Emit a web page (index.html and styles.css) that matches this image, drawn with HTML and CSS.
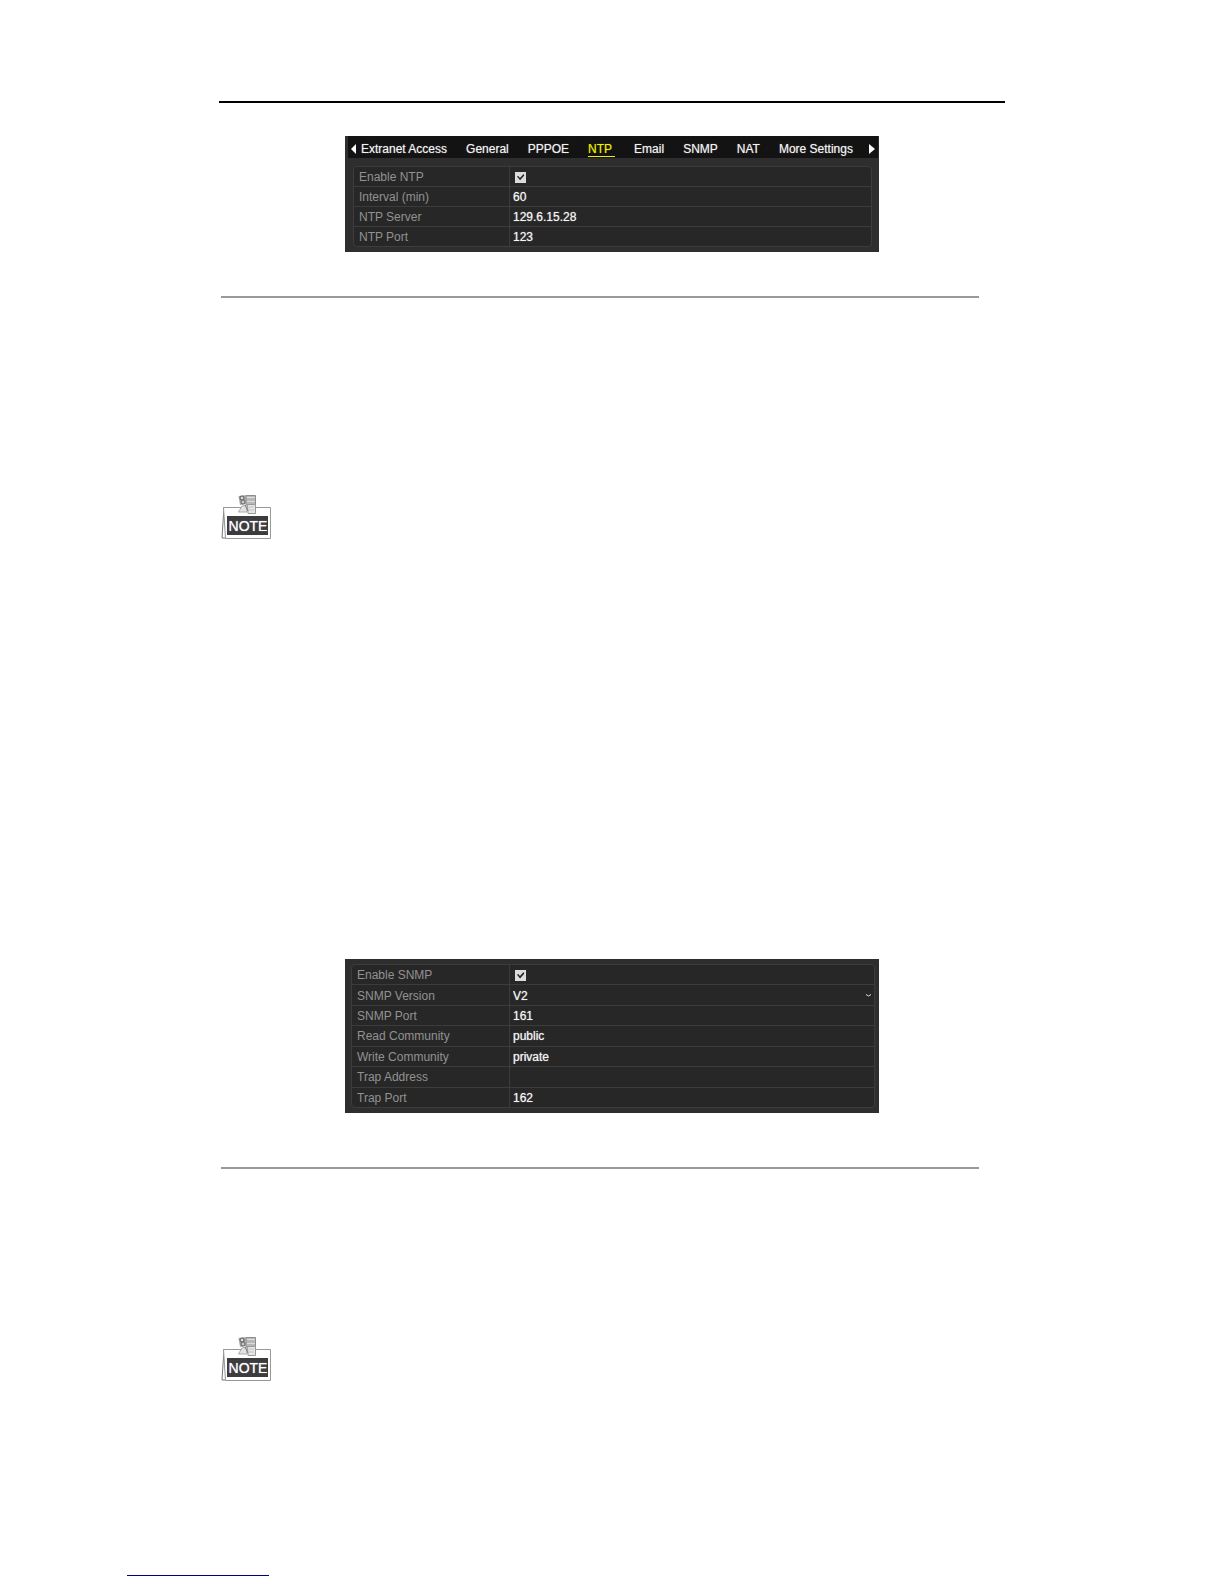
FILE: index.html
```html
<!DOCTYPE html>
<html lang="en">
<head>
<meta charset="utf-8">
<meta name="viewport" content="width=device-width, initial-scale=1">
<title>NTP and SNMP Settings</title>
<link rel="stylesheet" href="styles.css">
</head>
<body>
<svg class="defs" aria-hidden="true">
  <symbol id="note-sign" viewBox="0 0 52 48">
    <path d="M3 14 L1 45 H5 Z" fill="#fff" stroke="#777"/>
    <path d="M2.500 14.500 H49.500 V45.500 H4.500 Z" fill="#fff" stroke="#999"/>
    <rect x="6" y="23" width="41" height="19" fill="#3c3c3e"/>
    <path d="M25 2.500 H34.500 V11.500 H25 Z" fill="#b8b8b8" stroke="#8c8c8c"/>
    <path d="M26 4.500 H34 M26 8.500 H34" stroke="#dedede"/>
    <path d="M17.500 3 L25.500 2 V11 L19 12 Z" fill="#a5a5a5"/>
    <circle cx="21" cy="5" r="2" fill="#ddd" stroke="#555"/>
    <circle cx="22" cy="9" r="2" fill="#ccc" stroke="#666"/>
    <path d="M26.500 11.500 H34.500 V20.500 H27 Z" fill="#e6e6e6" stroke="#999"/>
    <path d="M28 14 H33 M28 17 H33" stroke="#c4c4c4"/>
    <path d="M17.500 19 L21 13 L26 12 V19 Z" fill="#e2e2e2" stroke="#aaa"/>
    <path d="M24 12 L27 18" stroke="#777"/>
  </symbol>
</svg>
<main class="page">
  <hr class="rule-top">

  <section class="panel panel-ntp" aria-label="NTP settings">
    <nav class="tabs" aria-label="Network settings">
      <button class="arrow" type="button" aria-label="Previous"><svg width="5" height="10" viewBox="0 0 5 10"><path d="M5 0 V10 L0 5 Z" fill="#fff"/></svg></button>
      <div class="tab-list">
        <a class="tab" href="#extranet">Extranet Access</a>
        <a class="tab" href="#general">General</a>
        <a class="tab" href="#pppoe">PPPOE</a>
        <a class="tab active" href="#ntp" aria-current="page">NTP</a>
        <a class="tab" href="#email">Email</a>
        <a class="tab" href="#snmp">SNMP</a>
        <a class="tab" href="#nat">NAT</a>
        <a class="tab" href="#more">More Settings</a>
      </div>
      <button class="arrow" type="button" aria-label="Next"><svg width="6" height="10" viewBox="0 0 6 10"><path d="M0 0 V10 L6 5 Z" fill="#fff"/></svg></button>
    </nav>
    <table class="settings settings-ntp">
      <tr><th scope="row"><label for="ntp-on">Enable NTP</label></th><td><input class="check" type="checkbox" id="ntp-on" checked></td></tr>
      <tr><th scope="row"><label for="ntp-int">Interval (min)</label></th><td><input class="field" type="text" id="ntp-int" value="60"></td></tr>
      <tr><th scope="row"><label for="ntp-srv">NTP Server</label></th><td><input class="field" type="text" id="ntp-srv" value="129.6.15.28"></td></tr>
      <tr><th scope="row"><label for="ntp-port">NTP Port</label></th><td><input class="field" type="text" id="ntp-port" value="123"></td></tr>
    </table>
  </section>

  <hr class="rule rule-ntp">

  <svg class="note note-first" width="52" height="48" viewBox="0 0 52 48"><use href="#note-sign"/><text class="note-text" x="27" y="38">NOTE</text></svg>

  <section class="panel panel-snmp" aria-label="SNMP settings">
    <table class="settings settings-snmp">
      <tr><th scope="row"><label for="snmp-on">Enable SNMP</label></th><td><input class="check" type="checkbox" id="snmp-on" checked></td></tr>
      <tr><th scope="row"><label for="snmp-ver">SNMP Version</label></th><td><div class="dropdown"><select class="field" id="snmp-ver"><option>V2</option></select><svg class="chevron" width="5" height="3" viewBox="0 0 5 3"><path d="M0 0.500 L2.500 2 L5 0.500" fill="none" stroke="#ddd"/></svg></div></td></tr>
      <tr><th scope="row"><label for="snmp-port">SNMP Port</label></th><td><input class="field" type="text" id="snmp-port" value="161"></td></tr>
      <tr><th scope="row"><label for="snmp-read">Read Community</label></th><td><input class="field" type="text" id="snmp-read" value="public"></td></tr>
      <tr><th scope="row"><label for="snmp-write">Write Community</label></th><td><input class="field" type="text" id="snmp-write" value="private"></td></tr>
      <tr><th scope="row"><label for="trap-addr">Trap Address</label></th><td><input class="field" type="text" id="trap-addr" value=""></td></tr>
      <tr><th scope="row"><label for="trap-port">Trap Port</label></th><td><input class="field" type="text" id="trap-port" value="162"></td></tr>
    </table>
  </section>

  <hr class="rule rule-snmp">

  <svg class="note note-second" width="52" height="48" viewBox="0 0 52 48"><use href="#note-sign"/><text class="note-text" x="27" y="38">NOTE</text></svg>
</main>
<footer class="footer"><a class="footer-link" href="#top" aria-label="Back to top"></a></footer>
</body>
</html>
```
FILE: styles.css
```css
* { box-sizing: border-box; }

body {
  margin: 0;
  background: #fff;
  font-family: "Liberation Sans", Arial, sans-serif;
  font-size: 12px;
  line-height: 14px;
}

.defs { display: block; width: 0; height: 0; }

.page {
  display: flex;
  flex-direction: column;
  max-width: 786px;
  margin: 0 auto;
  padding-top: 101px;
}

hr { margin: 0; border: 0; height: 2px; }
.rule-top { width: 100%; background: #000; }
.rule { width: 100%; max-width: 758px; margin-left: 2px; background: #999; }
.rule-ntp { margin-top: 44px; }
.rule-snmp { margin-top: 54px; }

.panel {
  width: 100%;
  max-width: 534px;
  align-self: center;
  background: #2e2e2e;
}
.panel-ntp { margin-top: 33px; padding: 0 1px 5px 3px; }
.panel-snmp { margin-top: 418px; padding: 5px 4px 5px 6px; }

.tabs {
  display: flex;
  align-items: center;
  gap: 5px;
  height: 22px;
  padding: 4px 3px 0;
  background: #131313;
}
.tab-list { display: flex; flex: 1; gap: 19px; white-space: nowrap; }
.tab { color: #f2f2f2; text-decoration: none; text-shadow: 0 0 1px #999; }
.tab.active {
  padding-right: 3px;
  color: #f0f000;
  border-bottom: 1px solid #f0f000;
  margin-bottom: -1px;
  text-shadow: 0 0 1px #880;
}
.arrow { display: flex; padding: 0; border: 0; background: none; }

.settings {
  width: 100%;
  table-layout: fixed;
  border: 1px solid #3c3c3c;
  border-radius: 4px;
  border-spacing: 0;
  background: #272727;
}
.settings-ntp { width: auto; min-width: 519px; height: 81px; margin: 8px 6px 0 5px; }
.settings-snmp { height: 144px; }
.settings th, .settings td {
  height: 20px;
  padding: 1px 0 0 5px;
  border-bottom: 1px solid #3c3c3c;
  text-align: left;
  vertical-align: middle;
}
.settings th {
  width: 158px;
  border-right: 1px solid #3c3c3c;
  color: #929292;
  font-weight: normal;
}
.settings-ntp th { width: 156px; }
.settings td { padding-left: 3px; }
.settings tr:last-child > * { height: 19px; border-bottom: 0; }

.field {
  display: block;
  width: 100%;
  height: 16px;
  padding: 0;
  border: 0;
  outline: 0;
  appearance: none;
  background: transparent;
  color: #f4f4f4;
  font: inherit;
  text-shadow: 0 0 1px #bbb;
}

.check {
  display: block;
  width: 11px;
  height: 11px;
  margin: 0 0 0 2px;
  appearance: none;
  background: #dcdcdc;
}
.check:checked::before {
  content: "";
  display: block;
  width: 11px;
  height: 11px;
  background: #222;
  clip-path: polygon(18% 45%, 30% 40%, 45% 58%, 78% 22%, 84% 36%, 46% 80%);
}

.dropdown { display: grid; align-items: center; }
.dropdown > * { grid-area: 1 / 1; }
.chevron { justify-self: end; margin-right: 3px; pointer-events: none; }

.note { display: block; margin-left: 2px; }
.note-first { margin-top: 195px; }
.note-second { margin-top: 166px; }
.note-text { font-size: 14px; fill: #fff; text-anchor: middle; text-shadow: 0 0 1px #ccc; }

.footer { margin-top: 192px; padding-left: 127px; }
.footer-link { display: block; width: 142px; border-bottom: 1px solid #000080; }
```
